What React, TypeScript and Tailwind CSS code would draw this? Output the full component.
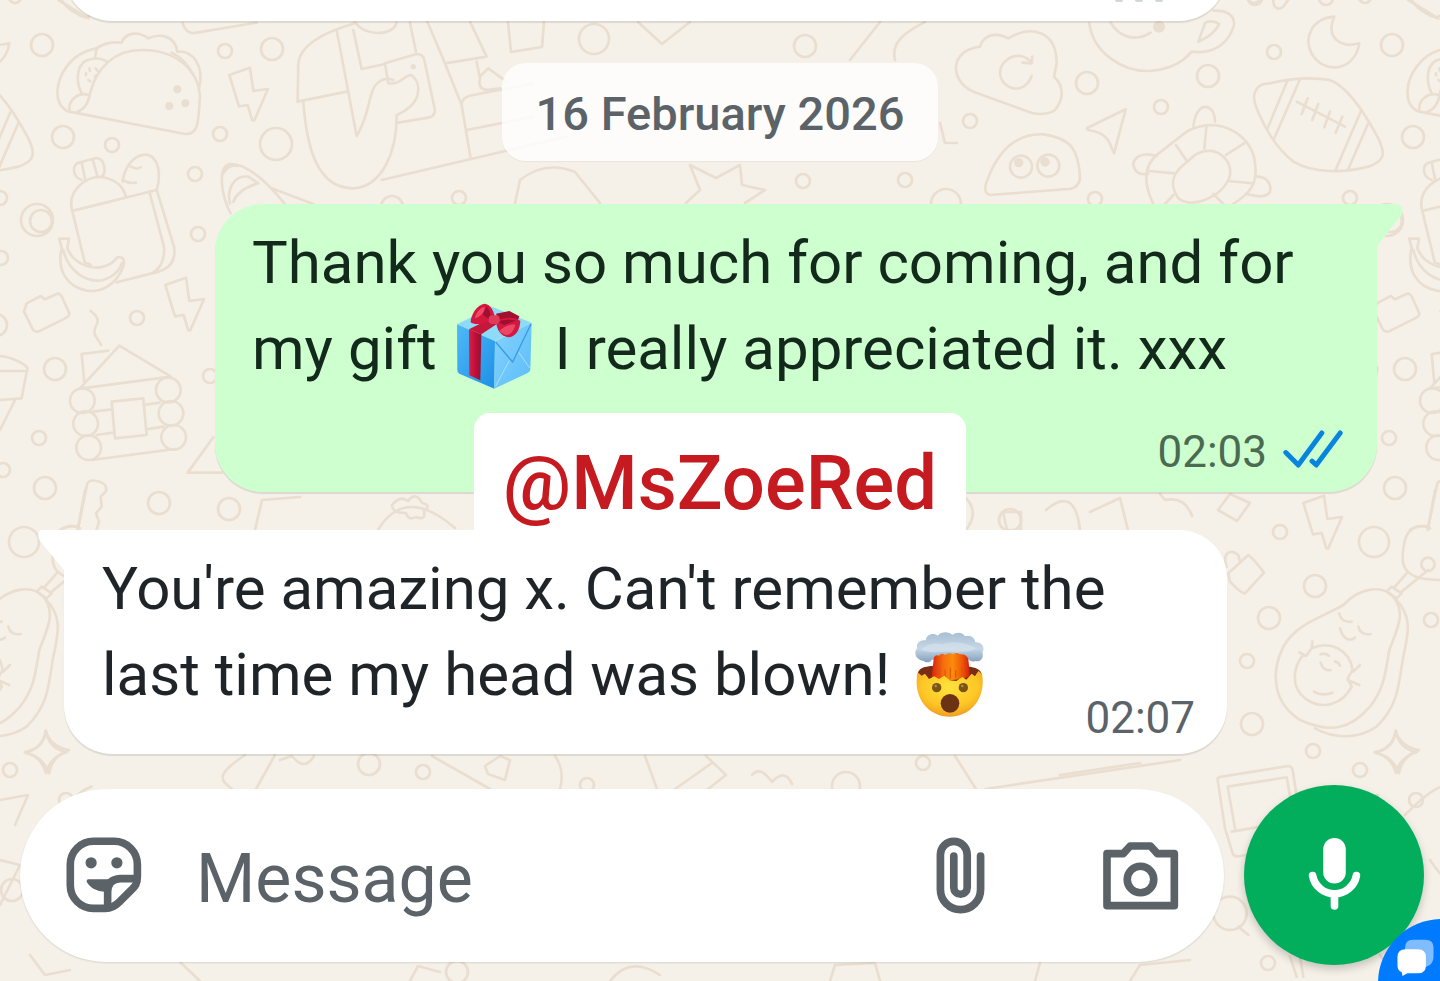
import type { ReactNode } from 'react'

const BOLT = 'M688 225 L750 203 L760 273 L804 267 L763 361 L757 361 L743 315 L717 319 Z'

type Dot = [number, number, number]

const dots: Dot[] = [
  [42, 45, 11], [225, 51, 7], [272, 49, 11], [63, 137, 11], [112, 145, 7], [220, 134, 7],
  [276, 144, 16], [195, 174, 7], [37, 220, 16], [198, 234, 7], [0, 198, 7], [1, 258, 7],
  [-4, 325, 11], [392, 207, 11], [459, 198, 7], [594, 39, 15], [805, 46, 11],
  [803, 181, 7], [905, 180, 7], [946, 204, 15], [1087, 83, 11], [970, 121, 7], [1095, 199, 7],
  [1161, 107, 7], [1208, 76, 11], [1274, 52, 7], [1391, 221, 11], [1255, -2, 7],
  [1326, -2, 7], [1365, -3, 6], [137, 318, 7], [55, 369, 11], [39, 438, 7], [45, 488, 11],
  [24, 542, 15], [159, 503, 11], [229, 509, 11], [210, 376, 7], [3, 470, 7],
  [1280, 532, 7], [1315, 586, 11], [1269, 618, 11], [1247, 661, 7],
  [1252, 724, 11], [1313, 751, 7], [1431, 620, 7], [369, 764, 11], [423, 772, 7],
  [587, 785, 7], [846, 786, 14], [923, 763, 7], [1268, 963, 7], [457, 972, 11], [1010, 520, 11],
  [12, 890, 11], [66, 800, 7], [10, 770, 7],
]

/* One repeat of the wallpaper; it is 1350 units wide. */
function WallpaperTile() {
  return (
    <g>
      {dots.map(([cx, cy, r]) => (
        <circle key={`${cx}-${cy}`} cx={cx} cy={cy} r={r} />
      ))}

      <g transform="scale(0.3333)" strokeWidth="8">
        {/* taco */}
        <path d="M205 335 C155 310 170 240 200 200 C225 165 260 150 290 145 C310 130 335 125 365 128 C375 100 410 90 445 115 C480 100 525 105 532 155 C575 150 615 195 597 265" />
        <path d="M208 335 L555 402 C600 405 595 350 600 290 C595 210 530 150 425 150 C345 150 290 200 270 280 C265 310 250 330 232 336" />
        <path d="M208 330 C205 300 235 275 265 285 M245 280 C225 240 230 185 270 178 C295 172 315 178 323 187 M290 145 L285 172 M515 158 C550 175 570 205 580 225" />
        <path d="M258 220 v6 M268 205 l2 8 M287 205 l6 8 M265 240 l6 4 M285 228 l2 6" />
        <g fill="#eaded0" stroke="none">
          <circle cx="532" cy="268" r="12" />
          <circle cx="508" cy="318" r="12" />
          <circle cx="556" cy="310" r="12" />
        </g>
        <path d="M180 -5 C200 25 225 45 265 55 M548 70 Q560 105 590 98 L770 68" />
        <path d={BOLT} />
        {/* backpack */}
        <path d="M255 790 L215 625 C205 570 260 525 310 532 C350 540 370 560 378 590 M220 632 L470 570 L522 740 C530 790 500 810 465 818 L350 847 M262 790 L272 795" />
        <path d="M448 575 L492 740 C495 785 480 805 460 818" />
        <path d="M245 540 C215 530 215 490 240 487 L290 474 C315 475 320 520 305 530 M245 487 L255 537 M278 478 L292 528" />
        <path d="M368 545 C375 490 410 462 440 464 C475 470 485 520 470 570 M392 500 q20 10 30 2 M368 540 q20 12 40 8" />
        {/* banana */}
        <path d="M178 716 H207 L202 745 C220 790 270 810 310 800 C340 792 345 780 352 772 C370 768 375 780 370 800 C345 860 300 878 260 872 C200 860 170 810 185 745 Z" />
        <path d="M190 750 C205 815 260 850 310 840 C340 830 360 810 366 790" />
        {/* croissant and scooter */}
        <path d="M692 640 C665 590 650 500 690 492 C740 490 800 545 855 612 M690 610 C680 570 700 525 745 530 L775 550 C740 560 710 580 700 605 M670 520 Q690 490 712 498 M815 565 L940 612" />
        <path d="M1065 70 C960 100 900 140 895 190 L893 305 L1040 275 M1010 90 L1070 408 C1100 360 1105 310 1115 280 C1125 245 1150 230 1180 240 M910 305 C920 440 950 565 1060 565 C1150 560 1190 450 1190 350" />
        <path d="M1060 90 L1085 207 L1155 192 M1065 65 C1090 110 1180 110 1190 68 M1230 68 L1248 155 M1155 190 L1250 162 Q1270 162 1273 180 L1305 330 Q1305 350 1285 353 L1195 368 M1155 190 L1165 250 C1205 255 1210 225 1235 225 C1265 250 1270 310 1190 345" />
        <path d="M1280 60 L1335 190 L1460 170 L1410 65 M1335 190 L1385 315 L1412 475 M1145 540 L1700 410 M1430 185 L1440 235 C1430 280 1470 270 1500 265 M1440 230 L1465 205 L1520 245 M1385 315 Q1385 290 1420 285 L1600 250 M1400 390 L1600 350" />
        <circle cx="1240" cy="200" r="4" />
      </g>

      {/* header strip between the cards */}
      <path d="M508 22 L511 52 L542 47 L544 22 M638 22 L662 44 L690 22" />
      <path d="M515 203 L520 180 Q545 160 575 172 L600 203 M690 165 L700 190 L686 203 M690 165 L716 178 L740 165 L742 185 L765 190 L745 203 M940 123 L945 143 H957 M850 60 L880 22 M895 60 C890 40 910 30 925 22" />

      <g transform="translate(940 0) scale(0.3333)" strokeWidth="8">
        {/* cloud */}
        <path d="M100 275 C25 240 30 150 120 140 C130 105 165 95 205 115 C270 75 350 90 350 190 L342 230 C375 260 370 300 345 330 C325 345 290 345 265 335 Z" />
        <path d="M275 190 C260 165 225 160 200 180 C170 205 175 245 210 262 C240 275 265 255 275 228 M248 188 L275 190 L277 170" />
        {/* cup */}
        <path d="M448 70 C460 160 550 215 625 213 C690 210 730 185 755 155 C830 165 870 120 882 75 C885 45 860 30 820 32 M512 68 C540 115 590 125 632 98 M775 125 L795 70 C800 62 825 62 838 72 C825 95 810 110 775 125" />
        <circle cx="657" cy="80" r="14" fill="#eaded0" />
        {/* moon */}
        <path d="M1183 50 C1115 55 1090 115 1115 160 C1150 225 1245 215 1258 130 C1205 145 1155 115 1183 50 Z" />
        {/* rugby ball */}
        <path d="M990 250 C940 250 935 290 950 325 C975 385 1005 440 1060 485 C1120 520 1210 520 1285 500 C1330 485 1340 465 1315 415 C1270 330 1220 260 1170 240 C1110 230 1040 238 990 250 Z" />
        <path d="M1043 240 L983 385 M1080 238 L1003 415 M1262 335 L1187 510 M1285 370 L1225 507 M1070 305 L1215 380 M1103 295 L1085 342 M1135 312 L1117 360 M1170 335 L1153 382 M1207 350 L1187 398" />
        {/* arrow, jelly and turtle */}
        <path d="M440 385 L557 328 L522 460 L513 440 C505 410 480 395 445 390 Z" />
        <path d="M150 585 C130 580 135 555 142 540 C175 450 230 400 310 403 C395 415 415 450 420 530 C420 555 405 565 385 567 Z" />
        <circle cx="243" cy="500" r="33" />
        <circle cx="325" cy="497" r="33" />
        <g fill="#eaded0" stroke="none">
          <circle cx="236" cy="488" r="14" />
          <circle cx="315" cy="486" r="14" />
        </g>
        <path d="M640 612 C610 550 610 500 650 465 L740 395 C840 340 940 410 945 490 C955 550 930 580 880 612 M715 595 C685 550 700 520 730 495 L765 465 C830 425 890 490 865 540 C855 560 835 580 815 590 C780 610 740 615 715 595" />
        <path d="M800 375 L793 445 M708 435 L742 485 M627 513 L705 520 M858 465 L912 430 M865 543 L940 550 M820 582 L850 612 M700 585 L675 612 M760 385 C765 300 825 305 825 365 M650 468 C610 455 580 470 580 495 C585 520 605 525 625 522 M945 530 C980 528 995 550 990 575 C980 595 950 590 920 582" />
        <path d="M1000 0 C1000 30 1020 30 1030 20 L1048 -5 M925 0 Q940 18 960 0 M1405 0 L1490 52 L1520 35" />
      </g>

      <g transform="translate(0 200) scale(0.3333)" strokeWidth="8">
        {/* brick, smoke and bolt */}
        <path d="M80 310 L122 288 L135 298 L175 280 Q185 285 190 300 L208 340 Q208 350 195 355 L115 395 Q100 395 97 385 L72 335 Z" />
        <path d="M272 333 C300 355 295 365 287 380 C275 405 295 415 303 435" />
        <path transform="translate(-192 30)" d={BOLT} />
        {/* cabin */}
        <path d="M240 565 L358 437 L513 530 L245 565 M253 548 L245 462 L325 452 M335 605 L430 595 L440 705 L345 715 Z M280 635 L335 628 M290 705 L340 698 M430 615 L480 608 M440 688 L490 680 M275 780 L525 747" />
        <circle cx="247" cy="602" r="37" />
        <circle cx="257" cy="671" r="37" />
        <circle cx="266" cy="743" r="37" />
        <circle cx="505" cy="570" r="37" />
        <circle cx="513" cy="640" r="37" />
        <circle cx="521" cy="712" r="37" />
        <path d="M640 712 L563 818 H665 M233 990 L262 850 Q270 838 290 843 Q325 850 317 875 L302 890 L305 920 L288 940 L297 965 L290 990 M180 990 Q210 970 240 985" />
        <path d="M0 468 C30 470 75 490 82 505 L65 595 L0 600 M0 513 L82 513 M45 600 L0 690" />
      </g>

      {/* row below the first message */}
      <path d="M392 505 q8 -10 16 -4 q8 -10 14 2 q10 2 2 8 q2 10 -8 6 q-8 4 -10 -4 q-14 0 -14 -8 M378 530 Q405 485 455 528 M965 497 Q980 512 966 530 M1003 512 h18 v18 h-14 Z" />
      <path d="M1160 494 L1165 500 Q1185 496 1192 516 M1218 510 L1230 494 L1250 503 L1237 521 Z M1046 510 Q1075 485 1080 530 M1090 512 L1120 498 L1128 530 M255 530 L262 500 L300 497" />
      <path transform="translate(1074 428) scale(0.3333)" strokeWidth="8" d={BOLT} />

      <g transform="translate(1200 490) scale(0.3333)" strokeWidth="8">
        <path d="M85 250 L145 195 Q160 205 192 248 L135 310 Q125 312 90 275 Z M80 230 C65 190 90 175 115 195 L120 215" />
        {/* avocado */}
        <path d="M430 345 C480 290 550 285 580 320 C620 370 590 420 568 480 C555 560 550 600 510 650 C450 720 390 730 300 690 C220 640 210 550 250 470 C290 400 360 385 430 345 Z" />
        <path d="M585 325 C640 380 625 430 608 510 C595 600 590 650 530 710 C470 750 400 745 345 715" />
        <path d="M310 495 C280 530 270 590 315 625 C370 665 430 640 455 590 L443 565 L458 540 C450 480 390 450 335 475 L318 498 L298 487 M335 475 L337 455 M443 570 L478 585 M460 545 L480 525" />
        <path d="M417 370 C425 395 440 397 455 395 M475 410 C480 430 495 435 512 432 M420 415 C430 450 450 455 465 443 M362 493 Q375 487 387 497 M405 515 Q415 515 420 527 M362 518 Q370 545 392 540 M342 605 Q365 620 397 608" />
        <path d="M560 305 L590 325 L605 310 L575 290 Z M585 290 L620 250 M605 305 L685 240 M685 110 L705 0 M685 110 C640 100 620 130 615 150 C595 230 610 270 720 270" />
        <circle cx="684" cy="223" r="20" />
        {/* sparkle and picture frame */}
        <path d="M587 722 Q600 770 657 780 Q605 800 597 850 Q580 800 525 788 Q580 775 587 722 Z" />
        <path d="M75 1015 L53 870 Q50 862 65 860 L265 828 Q275 828 278 840 L315 1080 M105 1015 L83 890 L260 862 L290 1030 M95 1025 L240 1000 M75 1015 L98 1090 Q102 1102 120 1098 L320 1065 M615 975 Q690 900 725 890" />
        <circle cx="90" cy="1270" r="50" />
        <path d="M115 1310 L145 1335 M270 1400 L290 1460 M300 1400 L310 1460 M690 1110 Q740 1190 790 1180" />
      </g>

      {/* row above the composer and the bottom edge */}
      <path d="M245 755 C215 775 220 780 232 789 M275 755 L256 789 M280 760 L292 756 Q305 772 314 756 M432 756 L490 789 M485 766 L500 756 L510 760 L505 780 L488 774 Z M555 756 Q565 770 560 789 M645 756 L657 789 M675 789 L712 763 M706 756 L726 775 L708 789 M752 775 Q760 765 772 782 Q785 768 792 784 M955 756 L976 789 M985 789 L1180 760 M1060 775 L1140 763" />
      <path d="M46 731 Q49 749 67 752 Q50 757 46 773 Q42 757 25 752 Q43 749 46 731 Z M0 800 L28 795 L15 825 M0 860 L20 865 L0 905 M30 955 L45 975 L70 970 M180 962 L200 981 M410 981 L418 966 L440 972 M610 981 Q630 955 660 975 M830 981 L835 965 L875 963 L880 981 M1040 963 L1035 981 M1130 981 L1140 965 L1190 960" />
    </g>
  )
}

function Wallpaper() {
  return (
    <svg
      aria-hidden="true"
      viewBox="0 0 1440 981"
      preserveAspectRatio="xMidYMid slice"
      className="absolute inset-0 h-full w-full"
      fill="none"
      stroke="#eaded0"
      strokeWidth="2.7"
      strokeLinecap="round"
      strokeLinejoin="round"
    >
      <WallpaperTile />
      <g transform="translate(-1350 0)">
        <WallpaperTile />
      </g>
      <g transform="translate(1350 0)">
        <WallpaperTile />
      </g>
    </svg>
  )
}

function GiftEmoji() {
  return (
    <svg role="img" aria-label="gift" viewBox="80 40 228 258" className="-my-1 mr-2 ml-1 inline-block h-[86px] w-[76px] align-[-16px]">
      <defs>
        <linearGradient id="gift-left" x1="0" y1="0" x2="1" y2="1">
          <stop offset="0" stopColor="#4fb9f8" />
          <stop offset="1" stopColor="#1d8fe6" />
        </linearGradient>
        <linearGradient id="gift-right" x1="0" y1="0" x2="1" y2="1">
          <stop offset="0" stopColor="#86d3fd" />
          <stop offset="1" stopColor="#5bbcf8" />
        </linearGradient>
        <linearGradient id="gift-ribbon" x1="0" y1="0" x2="1" y2="0">
          <stop offset="0" stopColor="#dc1f49" />
          <stop offset="0.5" stopColor="#c20f38" />
          <stop offset="1" stopColor="#8e1334" />
        </linearGradient>
      </defs>
      <path fill="#8edbf8" d="M83 104 L190 52 L307 99 L195 155 Z" />
      <path fill="url(#gift-left)" d="M83 104 L197 155 L195 297 L90 252 Q84 249 84 242 Z" />
      <path fill="url(#gift-right)" d="M197 155 L307 99 L303 240 Q302 246 295 250 L195 297 Z" />
      <path fill="none" stroke="#a5e2ff" strokeWidth="3" d="M199 289 L240 213 M302 236 L268 188" />
      <path fill="none" stroke="#3a9ce0" strokeWidth="4" strokeLinejoin="round" d="M199 157 L250 217 L305 103" />
      <path fill="url(#gift-ribbon)" d="M119 119 L156 134 L153 272 L120 257 Z" />
      <path fill="#c5163c" d="M119 119 L170 93 L206 101 L156 134 Z" />
      <path fill="#a3102f" d="M200 72 L240 64 L270 80 L264 96 L210 98 Z" />
      <path fill="#d3183f" d="M184 94 C160 104 134 107 124 98 C124 76 143 44 166 42 C182 44 192 60 196 80 Z" />
      <path fill="#ef4a68" d="M136 86 C142 64 156 52 166 52 C166 66 158 80 136 86 Z" />
      <path fill="#d3183f" d="M200 92 C235 80 262 82 273 94 C272 122 258 142 236 143 C215 139 201 122 200 92 Z" />
      <path fill="#ee4665" d="M210 124 C226 108 246 102 258 106 C252 128 240 137 229 136 Q216 132 210 124 Z" />
      <path fill="#9c0f30" d="M206 96 Q230 86 260 93 L224 106 Z M178 88 L160 74 Q168 60 172 50 Q182 62 184 80 Z" />
      <rect x="178" y="77" width="33" height="26" rx="11" fill="#e23a59" />
    </svg>
  )
}

function ExplodingHeadEmoji() {
  return (
    <svg role="img" aria-label="exploding head" viewBox="78 35 207 255" className="-my-1 ml-2.5 inline-block h-[85px] w-[69px] align-[-18px]">
      <defs>
        <radialGradient id="face" cx="0.5" cy="0.35" r="0.7">
          <stop offset="0" stopColor="#ffe23c" />
          <stop offset="0.6" stopColor="#fdc726" />
          <stop offset="1" stopColor="#ee9420" />
        </radialGradient>
        <linearGradient id="smoke" x1="0" y1="0" x2="0" y2="1">
          <stop offset="0" stopColor="#a9bfd4" />
          <stop offset="0.55" stopColor="#c5d6e6" />
          <stop offset="1" stopColor="#839fbc" />
        </linearGradient>
        <linearGradient id="blast" x1="0" y1="0" x2="1" y2="0">
          <stop offset="0" stopColor="#d8230f" />
          <stop offset="0.3" stopColor="#f66c0c" />
          <stop offset="0.55" stopColor="#fb8c0a" />
          <stop offset="0.8" stopColor="#ee5708" />
          <stop offset="1" stopColor="#cf1c10" />
        </linearGradient>
      </defs>
      <path fill="#7b2d14" d="M86 165 C86 135 120 136 182 136 C244 136 278 140 278 165 L262 190 H100 Z" />
      <path fill="url(#smoke)" d="M104 122 C82 120 72 98 84 84 C80 64 100 58 110 60 C112 42 134 36 146 46 C158 32 182 34 190 44 C204 32 224 38 228 48 C244 42 260 54 258 66 C278 64 290 82 280 96 C286 112 274 126 260 122 C250 126 242 122 238 116 L128 118 C124 128 110 128 104 122 Z" />
      <path fill="#d8e4ef" d="M96 88 C110 72 140 66 160 72 C190 60 230 66 262 84 C240 98 220 92 206 98 C170 88 130 104 96 88 Z" opacity="0.6" />
      <path fill="url(#blast)" d="M128 170 L134 116 Q136 102 150 106 Q158 96 168 104 Q180 94 192 102 Q204 94 212 102 Q232 100 238 116 L243 168 Q184 190 128 170 Z" />
      <path fill="none" stroke="#d9560a" strokeWidth="3" d="M152 140 V166 M168 148 V172 M184 142 V174 M200 150 V172 M218 140 V168" />
      <path fill="url(#face)" d="M86 156 L98 166 L108 160 L120 176 L136 168 L150 176 L166 166 L182 180 L202 182 L220 170 L232 178 L248 160 L258 168 L268 152 L279 160 C292 232 246 289 182 289 C116 289 70 230 86 156 Z" />
      <circle cx="143" cy="202" r="14" fill="#7a5318" />
      <circle cx="223" cy="202" r="14" fill="#7a5318" />
      <circle cx="140" cy="197" r="4" fill="#b08a45" />
      <circle cx="220" cy="197" r="4" fill="#b08a45" />
      <ellipse cx="183" cy="249" rx="28" ry="28" fill="#6b3313" />
    </svg>
  )
}

function ReadTicks() {
  return (
    <svg
      role="img"
      aria-label="Read"
      viewBox="427 720 182 116"
      className="mt-0.5 h-[38px] w-[60px]"
      fill="none"
      stroke="#0784e0"
      strokeWidth="15"
      strokeLinecap="round"
      strokeLinejoin="round"
    >
      <path d="M435 789 L473 827 L545 729 M515 815 L528 827 L601 729" />
    </svg>
  )
}

function StickerIcon() {
  return (
    <svg aria-hidden="true" viewBox="80 80 230 230" className="size-[76px]" fill="none" stroke="currentColor" strokeWidth="23" strokeLinejoin="round">
      <path d="M163 93 H226 A70 70 0 0 1 296 163 V200 C296 222 290 228 276 242 L242 276 C228 290 218 296 200 296 H163 A70 70 0 0 1 93 226 V163 A70 70 0 0 1 163 93 Z" />
      <path d="M296 206 H244 Q206 208 206 246 V296" />
      <path fill="currentColor" stroke="none" d="M148 208 H215 L216 244 C180 250 154 236 143 216 Q141 208 148 208 Z" />
      <circle cx="156" cy="158" r="17" fill="currentColor" stroke="none" />
      <circle cx="234" cy="158" r="17" fill="currentColor" stroke="none" />
    </svg>
  )
}

function ClipIcon() {
  return (
    <svg aria-hidden="true" viewBox="110 80 146 230" className="h-[77px] w-[49px]" fill="none" stroke="currentColor" strokeWidth="23" strokeLinecap="round">
      <path d="M243 137 V237 A60 60 0 0 1 123 237 V133 A40 40 0 0 1 203 133 V231 A20 20 0 0 1 163 231 V137" />
    </svg>
  )
}

function CameraIcon() {
  return (
    <svg aria-hidden="true" viewBox="608 90 230 208" className="h-[69px] w-[77px]" fill="none" stroke="currentColor" strokeWidth="23" strokeLinejoin="round">
      <path d="M622 128 H671 L692 105 H753 L774 128 H825 V285 H622 Z" />
      <circle cx="723" cy="206" r="40" />
    </svg>
  )
}

function MicIcon() {
  return (
    <svg aria-hidden="true" viewBox="230 195 164 226" className="h-[75px] w-[55px]" fill="none" stroke="currentColor" strokeWidth="23" strokeLinecap="round">
      <rect x="278" y="201" width="68" height="137" rx="34" fill="currentColor" stroke="none" />
      <path d="M246 314 A67 67 0 0 0 378 314 M312 372 V406" />
    </svg>
  )
}

function MessageText({ children }: { children: ReactNode }) {
  return <p className="text-[60px] leading-[86px]">{children}</p>
}

export default function App() {
  return (
    <main className="relative flex min-h-screen flex-col overflow-hidden bg-[#f5f1e8] font-['Roboto',sans-serif]">
      <Wallpaper />

      <section aria-label="Conversation" className="relative flex flex-1 flex-col">
        {/* tail end of the previous message */}
        <div className="-mt-[99px] mr-[213px] ml-16 h-[120px] rounded-[48px] bg-white pt-[99px] shadow-[0_2px_1px_rgba(0,0,0,0.1)]">
          <div aria-hidden="true" className="mr-16 flex justify-end gap-3">
            <span className="h-0.5 w-2 rounded-b bg-gray-300" />
            <span className="h-0.5 w-2 rounded-b bg-gray-300" />
            <span className="h-0.5 w-2 rounded-b bg-gray-300" />
          </div>
        </div>

        <time
          dateTime="2026-02-16"
          className="mt-[42px] self-center rounded-3xl bg-white/80 px-[34px] pt-1 text-[47px] leading-[94px] font-medium text-[#5b6368] shadow-[0_1px_1px_rgba(0,0,0,0.05)]"
        >
          16 February 2026
        </time>

        <article className="relative mt-[43px] mr-[63px] ml-[215px] rounded-[48px] rounded-tr-none bg-[#ceffce] pt-4 pr-[34px] pb-4 pl-[37px] text-[#12291b] shadow-[0_2px_1px_rgba(0,0,0,0.1)]">
          <svg aria-hidden="true" viewBox="0 0 27 44" className="absolute top-0 -right-[26px] h-11 w-[27px]" fill="#ceffce">
            <path d="M0 0 H20 Q30 2 25 12 L1 42 H0 Z" />
          </svg>
          <MessageText>
            Thank you so much for coming, and for
            <br />
            my gift <GiftEmoji /> I really appreciated it. xxx
          </MessageText>
          <div className="mt-9 flex items-start justify-end gap-4">
            <time className="text-[44px] leading-[48px] text-[#4b6a52]">02:03</time>
            <ReadTicks />
          </div>
        </article>

        <a
          href="#mszoered"
          className="absolute top-[413px] left-1/2 -translate-x-1/2 rounded-t-2xl bg-white px-[29px] pb-2 text-[76px] leading-[140px] font-medium text-[#c51a20]"
        >
          @MsZoeRed
        </a>

        <article className="relative mt-[38px] mr-[213px] ml-16 flex items-end justify-between rounded-[48px] rounded-tl-none bg-white pt-4 pr-8 pb-3 pl-[38px] text-[#1f2428] shadow-[0_2px_1px_rgba(0,0,0,0.1)]">
          <svg aria-hidden="true" viewBox="0 0 27 44" className="absolute top-0 -left-[26px] h-11 w-[27px]" fill="#ffffff">
            <path d="M27 0 H3 Q-2 3 2 11 L26 40 H27 Z" />
          </svg>
          <div className="flex-1 pb-6">
            <MessageText>
              You're amazing x. Can't remember the
              <br />
              last time my head was blown! <ExplodingHeadEmoji />
            </MessageText>
          </div>
          <time className="-ml-10 text-[44px] leading-[48px] text-[#5b6368]">02:07</time>
        </article>
      </section>

      <form className="relative mt-[31px] flex items-center gap-5 pr-4 pb-4 pl-5" onSubmit={(e) => e.preventDefault()}>
        <div className="flex h-[173px] min-w-0 flex-1 items-center rounded-full bg-white pr-[45px] pl-[46px] text-[#5b6368] shadow-[0_1px_2px_rgba(0,0,0,0.12)]">
          <button type="button" aria-label="Stickers">
            <StickerIcon />
          </button>
          <input
            type="text"
            aria-label="Message"
            placeholder="Message"
            className="ml-[54px] min-w-0 flex-1 bg-transparent pt-2 text-[68px] leading-[80px] outline-none placeholder:text-[#5b6368]"
          />
          <button type="button" aria-label="Attach" className="mr-[117px]">
            <ClipIcon />
          </button>
          <button type="button" aria-label="Camera">
            <CameraIcon />
          </button>
        </div>
        <button
          type="button"
          aria-label="Record voice message"
          className="flex size-[180px] shrink-0 items-center justify-center rounded-full bg-[#02ad5c] pb-1 text-white shadow-[0_4px_8px_rgba(0,0,0,0.2)]"
        >
          <MicIcon />
        </button>
      </form>

      <button
        type="button"
        aria-label="Open chat"
        className="absolute -right-[66px] -bottom-[66px] flex size-32 items-start rounded-full bg-[#007bff] pt-[19px] pl-[17px]"
      >
        <svg aria-hidden="true" viewBox="495 500 120 118" className="h-[39px] w-10">
          <path fill="#80bdff" d="M549 505 H587 Q611 505 611 529 V556 Q611 572 600 582 L588 588 L525 540 V529 Q525 505 549 505 Z" />
          <path fill="#ffffff" d="M526 534 H564 Q588 534 588 558 V584 Q588 607 564 607 H532 L517 615 L515 604 Q502 598 502 584 V558 Q502 534 526 534 Z" />
        </svg>
      </button>
    </main>
  )
}
